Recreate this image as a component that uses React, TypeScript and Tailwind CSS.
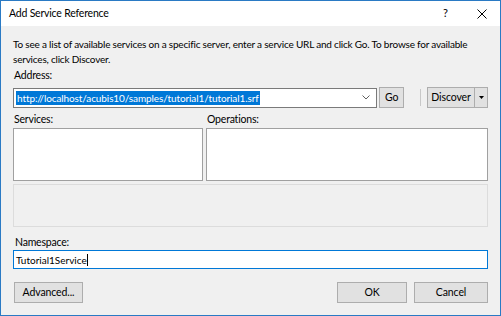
import React from 'react';

const font = { fontFamily: 'Lato, "Noto Sans", sans-serif' };

function Btn({ children, className = '' }: { children: React.ReactNode; className?: string }) {
    return (
        <button className={`h-[21px] border border-[#adadad] bg-[#e1e1e1] text-[10.5px] tracking-[-0.1px] text-black flex items-center justify-center ${className}`}>
            {children}
        </button>
    );
}

export default function App() {
    return (
        <div className="w-[501px] h-[316px] bg-[#f0f0f0] border border-[#2a7ac4] flex flex-col text-black text-[10.5px] tracking-[-0.2px]" style={font}>
            {/* Title bar */}
            <div className="h-[25px] bg-white flex items-center pl-[8px] shrink-0">
                <span className="text-[10.5px] flex-1">Add Service Reference</span>
                <span className="text-[11px] w-[12px] mr-[22px]">?</span>
                <svg width="10" height="10" viewBox="0 0 10 10" className="mr-[13px]">
                    <path d="M0.5 0.5 L9.5 9.5 M9.5 0.5 L0.5 9.5" stroke="#000" strokeWidth="1" />
                </svg>
            </div>

            <div className="flex-1 flex flex-col px-[12px] pt-[11px]">
                <p className="text-[10px] leading-[15px] tracking-[-0.2px]">
                    To see a list of available services on a specific server, enter a service URL and click Go. To browse for available services, click Discover.
                </p>

                <div className="mt-[1px] ml-[1px] leading-[14px]">Address:</div>
                <div className="flex items-center mt-[5px]">
                    <div className="w-[366px] h-[20px] bg-white border border-[#7a7a7a] flex items-center pl-[2px] pr-[6px]">
                        <span className="bg-[#0078d7] text-white text-[10px] tracking-[-0.1px] leading-[14px] px-[1px]">
                            http://localhost/acubis10/samples/tutorial1/tutorial1.srf
                        </span>
                        <span className="flex-1" />
                        <svg width="8" height="5" viewBox="0 0 8 5">
                            <path d="M0.5 0.5 L4 4 L7.5 0.5" stroke="#606060" fill="none" strokeWidth="1" />
                        </svg>
                    </div>
                    <Btn className="w-[25px] ml-[2px]">Go</Btn>
                    <div className="w-px h-[17px] bg-[#c8c8c8] ml-[16px]" />
                    <div className="ml-[6px] flex h-[21px] border border-[#adadad] bg-[#e1e1e1]">
                        <div className="w-[47px] flex items-center justify-center text-[10.5px] tracking-[-0.1px] border-r border-[#adadad]">Discover</div>
                        <div className="w-[12px] flex items-center justify-center">
                            <svg width="5" height="3" viewBox="0 0 5 3"><path d="M0 0 H5 L2.5 3 Z" fill="#000" /></svg>
                        </div>
                    </div>
                </div>

                <div className="flex mt-[4px] gap-[3px]">
                    <div className="w-[190px] flex flex-col">
                        <div className="leading-[14px] ml-[1px]">Services:</div>
                        <div className="h-[53px] mt-[2px] bg-white border border-[#a0a0a0]" />
                    </div>
                    <div className="flex-1 flex flex-col">
                        <div className="leading-[14px] ml-[1px]">Operations:</div>
                        <div className="h-[53px] mt-[2px] bg-white border border-[#a0a0a0]" />
                    </div>
                </div>

                <div className="h-[43px] mt-[3px] bg-[#f0f0f0] border border-[#dcdcdc]" />

                <div className="leading-[14px] mt-[8px] ml-[2px]">Namespace:</div>
                <div className="h-[19px] mt-[1px] bg-white border border-[#0078d7] flex items-center pl-[2px]">
                    <span className="text-[10px] tracking-normal leading-[14px]">Tutorial1Service</span>
                    <span className="w-px h-[12px] bg-black" />
                </div>

                <div className="flex mt-[13px]">
                    <Btn className="w-[69px] ml-[1px]">Advanced...</Btn>
                    <span className="flex-1" />
                    <Btn className="w-[70px] border-[#0078d7]">OK</Btn>
                    <Btn className="w-[74px] ml-[7px]">Cancel</Btn>
                </div>
            </div>
        </div>
    );
}
